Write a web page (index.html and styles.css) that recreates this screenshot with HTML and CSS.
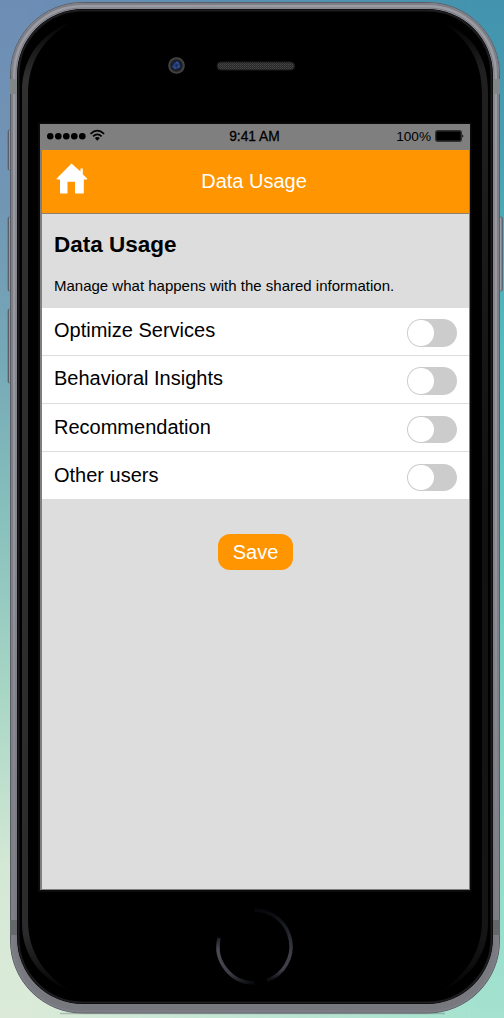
FILE: index.html
```html
<!DOCTYPE html>
<html lang="en">
<head>
<meta charset="utf-8">
<title>Data Usage</title>
<link rel="stylesheet" href="styles.css">
</head>
<body>
<div class="stage">
  <svg class="device" width="504" height="1018" viewBox="0 0 504 1018" aria-hidden="true">
    <defs>
      <linearGradient id="metal" x1="0" y1="0" x2="0" y2="1"><stop offset="0" stop-color="#9b9ba4"/><stop offset=".5" stop-color="#96969f"/><stop offset="1" stop-color="#77777e"/></linearGradient>
      <linearGradient id="shineL" x1="0" y1="0" x2="0" y2="1"><stop offset="0" stop-color="#333" stop-opacity="0"/><stop offset=".06" stop-color="#303030"/><stop offset=".94" stop-color="#2b2b2b"/><stop offset="1" stop-color="#333" stop-opacity="0"/></linearGradient>
      <linearGradient id="shineR" x1="0" y1="0" x2="0" y2="1"><stop offset="0" stop-color="#222" stop-opacity="0"/><stop offset=".05" stop-color="#202020"/><stop offset=".5" stop-color="#111"/><stop offset=".94" stop-color="#151515"/><stop offset="1" stop-color="#222" stop-opacity="0"/></linearGradient>
      <linearGradient id="button"><stop offset="0" stop-color="#45474d"/><stop offset=".4" stop-color="#b2b3bb"/><stop offset="1" stop-color="#606168"/></linearGradient>
      <radialGradient id="lens"><stop offset="0" stop-color="#15264d"/><stop offset=".28" stop-color="#2a4384"/><stop offset=".5" stop-color="#111a30"/><stop offset=".65" stop-color="#222"/><stop offset=".9" stop-color="#4a4a4a"/><stop offset="1" stop-color="#222"/></radialGradient>
      <pattern id="mesh" width="2" height="2" patternUnits="userSpaceOnUse"><rect width="2" height="2" fill="#292929"/><rect width="1" height="1" fill="#454545"/><rect x="1" y="1" width="1" height="1" fill="#3c3c3c"/></pattern>
      <linearGradient id="ringR" x1="0" y1="0" x2="0" y2="1"><stop offset="0" stop-color="#05070a"/><stop offset=".25" stop-color="#1d1f27"/><stop offset=".65" stop-color="#40414b"/><stop offset=".85" stop-color="#3c3d46"/><stop offset="1" stop-color="#08090c"/></linearGradient>
      <linearGradient id="ringL" gradientUnits="userSpaceOnUse" x1="216" y1="937" x2="254" y2="984"><stop offset="0" stop-color="#101116"/><stop offset=".18" stop-color="#4a4b55"/><stop offset=".6" stop-color="#3c3d46"/><stop offset="1" stop-color="#050608"/></linearGradient>
    </defs>
    <g fill="url(#button)" stroke="#55575e" stroke-width=".6">
      <rect x="8" y="130" width="5" height="40" rx="1.5"/>
      <rect x="8" y="217" width="5" height="74" rx="1.5"/>
      <rect x="8" y="309" width="5" height="74" rx="1.5"/>
      <rect x="498" y="217" width="4.5" height="74" rx="1.5"/>
    </g>
    <path d="M60 1013.5H445" stroke="#45504c" stroke-opacity=".3" stroke-width="1.5"/>
    <rect x="10.500" y="2.500" width="489" height="1010.500" rx="72" fill="url(#metal)" stroke="#5b5d66"/>
    <rect x="12" y="4" width="486" height="1007.500" rx="70.500" fill="none" stroke="#7d7e86" stroke-width="2"/>
    <rect x="16" y="8" width="478" height="999" rx="66.500" fill="none" stroke="#77787f" stroke-width="1"/>
    <g fill="#808786"><rect x="10" y="79" width="7" height="15"/><rect x="493" y="79" width="7" height="15"/></g>
    <g fill="#64686b"><rect x="10" y="920" width="7" height="15"/><rect x="493" y="920" width="7" height="15"/></g>
    <rect x="17" y="9" width="476" height="995" rx="66" fill="#000"/>
    <rect x="18.500" y="10.500" width="473" height="992" rx="64.500" fill="none" stroke="#1d1d1f" stroke-width="2"/>
    <path d="M75 20C44 32 22 54 22 92V923C22 958 43 980 72 992C45 976 28 953 28 920V95C28 58 46 36 75 20Z" fill="url(#shineL)"/>
    <path d="M440 21C470 32 488 55 488 92V923C488 958 466 981 438 993C466 976 482 952 482 920V95C482 57 465 36 440 21Z" fill="url(#shineR)"/>
    <circle cx="176.500" cy="65.500" r="8.500" fill="url(#lens)"/>
    <path d="M172.500 66l3 3M176 62l3 1M178 67l2-1" stroke="#5479d0" stroke-width="1.500" opacity=".4"/>
    <rect x="217" y="62" width="77.500" height="8" rx="4" fill="url(#mesh)" stroke="#1b1b1b"/>
    <path d="M254.500 910A36.500 36.500 0 0 1 267 980.800" fill="none" stroke="url(#ringR)" stroke-width="3.500"/>
    <path d="M219 938A36.500 36.500 0 0 0 254.500 983" fill="none" stroke="url(#ringL)" stroke-width="3.500"/>
    <rect x="38" y="122.500" width="433.500" height="769.500" fill="#0b0b0b"/>
  </svg>
  <main class="screen">
    <div class="status">
      <div class="signal">
        <svg width="60" height="14" viewBox="0 0 60 14">
          <g fill="#000"><circle cx="3.200" cy="7.300" r="3.300"/><circle cx="11.300" cy="7.300" r="3.300"/><circle cx="19.300" cy="7.300" r="3.300"/><circle cx="27.300" cy="7.300" r="3.300"/><circle cx="35.300" cy="7.300" r="3.300"/></g>
          <g fill="none" stroke="#000" stroke-width="1.700"><path d="M43.500 4.800Q50.300-1.500 57.100 4.800M46 7.300Q50.300 3.400 54.600 7.300"/></g>
          <path d="M47.800 9.100Q50.300 7 52.800 9.100L50.300 11.700Z"/>
        </svg>
      </div>
      <div class="clock">9:41 AM</div>
      <div class="power"><span>100%</span>
        <svg width="30" height="12" viewBox="0 0 30 12"><rect x=".7" y=".7" width="25.600" height="10.600" rx="1.800" fill="#000" stroke="#333" stroke-width="1.400"/><path d="M27.300 4.200q2 1.800 0 3.600Z"/></svg>
      </div>
    </div>
    <header class="bar">
      <svg class="home" width="32" height="32" viewBox="0 0 32 32"><path fill="#fff" d="M15.500 .5L24.500 8.500V5.500H26.800V11.200L31.300 15.700L30.800 16.500H27.800V30.500H19V18.800H11.500V30.500H4V16.500H1L.4 15.700Z"/></svg>
      <div class="title">Data Usage</div>
    </header>
    <section class="intro">
      <h1>Data Usage</h1>
      <p>Manage what happens with the shared information.</p>
    </section>
    <div class="options">
      <div class="row"><span>Optimize Services</span><i class="toggle"></i></div>
      <div class="row"><span>Behavioral Insights</span><i class="toggle"></i></div>
      <div class="row low"><span>Recommendation</span><i class="toggle"></i></div>
      <div class="row low"><span>Other users</span><i class="toggle"></i></div>
    </div>
    <button class="save">Save</button>
  </main>
</div>
</body>
</html>
```
FILE: styles.css
```css
* { box-sizing: border-box; }
body { margin: 0; font-family: "Liberation Sans", Arial, sans-serif; }
.stage {
  position: relative;
  width: 504px;
  height: 1018px;
  padding: 124px 34px 128px 40px;
  overflow: hidden;
  background: linear-gradient(180deg, #6e8db5 0%, #7196b4 20%, #75a8b7 35%, #86bfbc 50%, #a8d6c5 68%, #d3e8d5 85%, #dcebd9 100%);
}
.stage::before {
  content: "";
  position: absolute;
  inset: 0;
  background: linear-gradient(180deg, #4393ae 0%, #48a0b3 15%, #55bcbf 35%, #67cbc1 55%, #86d8c7 75%, #a5e2cf 100%);
  -webkit-mask-image: linear-gradient(90deg, transparent 5%, #000 95%);
  mask-image: linear-gradient(90deg, transparent 5%, #000 95%);
}
.device { position: absolute; left: 0; top: 0; }
.screen {
  position: relative;
  height: 766px;
  background: #ddd;
  border: solid #7f7f7f;
  border-width: 1px 1px 1px 2px;
  color: #000;
}
.status {
  height: 25px;
  padding: 0 4px 0 5px;
  background: #7f7f7f;
  display: grid;
  grid-template-columns: 1fr auto 1fr;
  align-items: center;
}
.signal, .power { display: flex; align-items: center; }
.signal { padding-bottom: 3px; }
.clock { font-size: 13.8px; line-height: 24px; -webkit-text-stroke: .3px #000; padding: 0 3px 1px 0; }
.power { justify-content: flex-end; gap: 4px; font-size: 13.6px; padding-bottom: 3px; }
.bar {
  height: 64px;
  padding: 0 14px;
  background: #ff9500;
  border-bottom: 1px solid #8e806b;
  display: grid;
  grid-template-columns: 32px 1fr 32px;
  align-items: center;
  color: #fff;
}
.home { margin-top: -5px; }
.title { text-align: center; font-size: 20px; line-height: 24px; padding-right: 3px; margin-top: -2px; }
.intro { height: 94px; padding: 17px 12px 0; }
.intro h1 { margin: 0; font-size: 22.5px; line-height: 28px; }
.intro p { margin: 18px 0 0; font-size: 15px; line-height: 18px; white-space: nowrap; }
.options { background: #fff; }
.row {
  height: 48px;
  padding: 11px 12px 0;
  border-bottom: 1px solid #ddd;
  display: flex;
  align-items: flex-start;
  justify-content: space-between;
  font-size: 20px;
  line-height: 23px;
}
.row.low { padding-top: 12px; }
.row:last-child { border-bottom: 0; height: 47px; }
.toggle { display: block; width: 50px; height: 28px; padding: 1px; border-radius: 14px; background: #ccc; }
.row.low .toggle { height: 27px; padding-top: .5px; }
.toggle::before { content: ""; display: block; width: 25.5px; height: 25.5px; border-radius: 50%; background: #fff; }
.save {
  display: block;
  width: 75px;
  height: 36px;
  margin: 35px 0 0 176px;
  padding: 0;
  border: 0;
  border-radius: 12px;
  background: #ff9500;
  color: #fff;
  font: 20px "Liberation Sans", Arial, sans-serif;
}
```
